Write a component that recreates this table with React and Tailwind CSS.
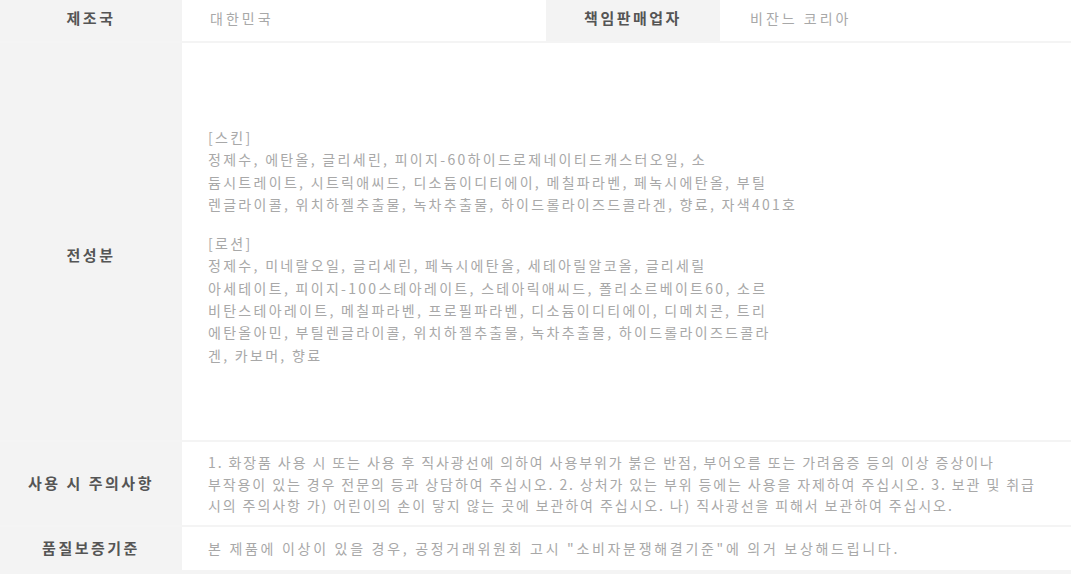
const FONT = { fontFamily: '"Noto Sans CJK KR", "Noto Sans", sans-serif' };

const SKIN = [
  '[스킨]',
  '정제수, 에탄올, 글리세린, 피이지-60하이드로제네이티드캐스터오일, 소',
  '듐시트레이트, 시트릭애씨드, 디소듐이디티에이, 메칠파라벤, 페녹시에탄올, 부틸',
  '렌글라이콜, 위치하젤추출물, 녹차추출물, 하이드롤라이즈드콜라겐, 향료, 자색401호',
];

const LOTION = [
  '[로션]',
  '정제수, 미네랄오일, 글리세린, 페녹시에탄올, 세테아릴알코올, 글리세릴',
  '아세테이트, 피이지-100스테아레이트, 스테아릭애씨드, 폴리소르베이트60, 소르',
  '비탄스테아레이트, 메칠파라벤, 프로필파라벤, 디소듐이디티에이, 디메치콘, 트리',
  '에탄올아민, 부틸렌글라이콜, 위치하젤추출물, 녹차추출물, 하이드롤라이즈드콜라',
  '겐, 카보머, 향료',
];

const CAUTION = [
  '1. 화장품 사용 시 또는 사용 후 직사광선에 의하여 사용부위가 붉은 반점, 부어오름 또는 가려움증 등의 이상 증상이나',
  '부작용이 있는 경우 전문의 등과 상담하여 주십시오. 2. 상처가 있는 부위 등에는 사용을 자제하여 주십시오. 3. 보관 및 취급',
  '시의 주의사항 가) 어린이의 손이 닿지 않는 곳에 보관하여 주십시오. 나) 직사광선을 피해서 보관하여 주십시오.',
];

function Label({ children, className = '' }) {
  return (
    <div
      className={`bg-[#f3f3f3] flex justify-center text-[15px] font-bold text-[#555] tracking-[2.5px] ${className}`}
    >
      {children}
    </div>
  );
}

function Lines({ lines }) {
  return lines.map((l, i) => (
    <div key={i} className="whitespace-nowrap">
      {l}
    </div>
  ));
}

export default function App() {
  return (
    <div
      style={FONT}
      className="w-[1071px] h-[574px] bg-[#f4f4f4] grid grid-cols-[182px_1fr] grid-rows-[41px_397px_83px_43px] gap-y-[2px] content-start overflow-hidden"
    >
      {/* 제조국 / 책임판매업자 */}
      <Label className="items-center pb-1">제조국</Label>
      <div className="flex text-[14px] text-[#a8a8a8] tracking-[3px]">
        <div className="w-[364px] bg-white flex items-center pl-[28px] pb-1">대한민국</div>
        <Label className="w-[174px] items-center pb-1">책임판매업자</Label>
        <div className="flex-1 bg-white flex items-center pl-[30px] pb-1">비잔느 코리아</div>
      </div>

      {/* 전성분 */}
      <Label className="items-center pt-[28px]">전성분</Label>
      <div className="bg-white pl-[26px] pt-[83px] text-[14px] leading-[22.3px] text-[#a8a8a8] tracking-[2.3px]">
        <Lines lines={SKIN} />
        <div className="h-[17px]" />
        <Lines lines={LOTION} />
      </div>

      {/* 사용 시 주의사항 */}
      <Label className="items-center">사용 시 주의사항</Label>
      <div className="bg-white pl-[26px] pt-[10px] text-[14px] leading-[21.5px] text-[#a8a8a8] tracking-[1.9px]">
        <Lines lines={CAUTION} />
      </div>

      {/* 품질보증기준 */}
      <Label className="items-center">품질보증기준</Label>
      <div className="bg-white flex items-center pl-[26px] text-[14px] text-[#a8a8a8] tracking-[2.7px]">
        본 제품에 이상이 있을 경우, 공정거래위원회 고시 "소비자분쟁해결기준"에 의거 보상해드립니다.
      </div>
    </div>
  );
}
